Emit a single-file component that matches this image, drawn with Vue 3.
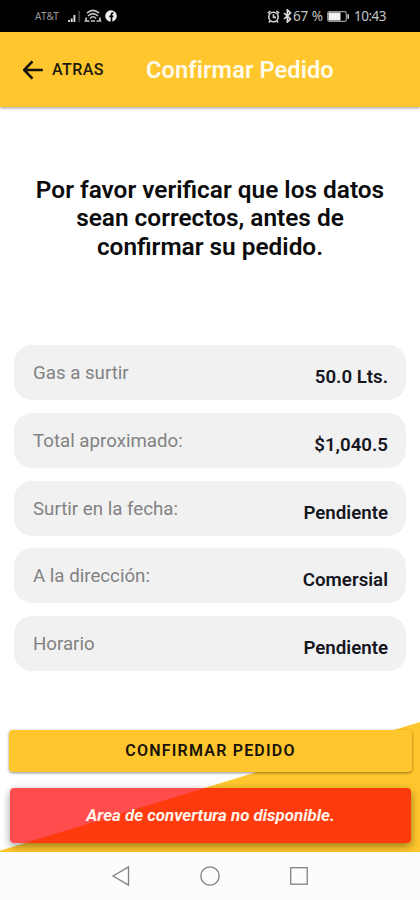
<template>
  <div class="screen">
    <div class="status-bar">
      <div class="status-left">
        <span class="carrier">AT&amp;T</span>
        <svg class="signal" width="13" height="13" viewBox="0 0 13 13">
          <path d="M1 10v2M3.7 8.5V12M6.4 5v7" stroke="#ddd" stroke-width="1.9" />
          <path d="M11.2 1v11" stroke="#444" stroke-width="1.6" />
        </svg>
        <svg class="wifi" width="18" height="14" viewBox="0 0 18 14" fill="none" stroke="#c4c4c4" stroke-width="1.6">
          <path d="M3 4.2Q9-1.5 15 4.2M4 7Q9 2.2 14 7M6 9.5Q9 6 12 9.5M2.5 8.5l-1 3.5h4M7 12h4M15.5 8.5l1 3.5h-4" />
        </svg>
        <svg class="facebook" width="12" height="12" viewBox="0 0 12 12">
          <circle cx="6" cy="6" r="5.8" fill="#eee" />
          <path d="M8.5 3H7.7Q6.5 3 6.5 4.3V12M4.3 6.4h4" fill="none" stroke="#000" stroke-width="1.6" />
        </svg>
      </div>
      <div class="status-right">
        <svg class="alarm" width="13" height="13" viewBox="0 0 13 13" fill="none" stroke="#d5d5d5" stroke-width="1.6">
          <circle cx="6.5" cy="7" r="4.7" />
          <path d="M.8 3.2L3.5 1M12.2 3.2L9.5 1M6.5 4.3V7.4H9M3 11l-1 1.5M10 11l1 1.5" />
        </svg>
        <svg class="bluetooth" width="9" height="14" viewBox="0 0 9 14" fill="none" stroke="#ddd" stroke-width="1.7">
          <path d="M1 4l6.5 6L4.4 13V1l3.1 3L1 10" />
        </svg>
        <span class="percent">67 %</span>
        <svg class="battery" width="23" height="11" viewBox="0 0 23 11">
          <rect x=".7" y=".7" width="18.6" height="9.6" rx="1.5" fill="none" stroke="#999" stroke-width="1.2" />
          <rect x="1.5" y="1.5" width="12" height="8" fill="#f2f2f2" />
          <path d="M21.2 3.3v4.4" stroke="#ccc" stroke-width="1.7" />
        </svg>
        <span class="clock">10:43</span>
      </div>
    </div>

    <header class="toolbar">
      <button class="back-btn">
        <svg width="22" height="20" viewBox="0 0 22 20" fill="none" stroke="#16120a" stroke-width="2.6" stroke-linejoin="round">
          <path d="M10.5 1.4L2.2 10l8.3 8.6M2.2 10h18.6" />
        </svg>
        <span>ATRAS</span>
      </button>
      <h1>Confirmar Pedido</h1>
    </header>

    <main class="content">
      <h2 class="notice">
        Por favor verificar que los datos<br>
        sean correctos, antes de<br>
        confirmar su pedido.
      </h2>

      <div class="details">
        <div v-for="item in details" :key="item.label" class="detail">
          <span class="label">{{ item.label }}</span>
          <span class="value">{{ item.value }}</span>
        </div>
      </div>

      <div class="actions">
        <button class="confirm-btn">CONFIRMAR PEDIDO</button>
        <div class="toast">Area de convertura no disponible.</div>
      </div>
    </main>

    <nav class="nav-bar">
      <svg width="20" height="22" viewBox="0 0 20 22">
        <path d="M2 11L17.5 2v18z" />
      </svg>
      <svg width="20" height="22" viewBox="0 0 20 22">
        <circle cx="10" cy="11" r="9.2" />
      </svg>
      <svg width="20" height="22" viewBox="0 0 20 22">
        <rect x="1.7" y="2.7" width="16.5" height="16.5" />
      </svg>
    </nav>
  </div>
</template>

<script setup>
const details = [
  { label: 'Gas a surtir', value: '50.0 Lts.' },
  { label: 'Total aproximado:', value: '$1,040.5' },
  { label: 'Surtir en la fecha:', value: 'Pendiente' },
  { label: 'A la dirección:', value: 'Comersial' },
  { label: 'Horario', value: 'Pendiente' }
];
</script>

<style>
body {
  margin: 0;
}
</style>

<style scoped>
.screen {
  width: 420px;
  height: 900px;
  display: flex;
  flex-direction: column;
  overflow: hidden;
  background: #fff;
  font-family: Roboto, "Liberation Sans", sans-serif;
}
button {
  border: none;
  padding: 0;
  font-family: inherit;
  cursor: pointer;
}
.status-bar {
  height: 32px;
  flex: none;
  box-sizing: border-box;
  display: flex;
  justify-content: space-between;
  padding: 0 34px 0 35px;
  background: #000;
  color: #c4c4c4;
}
.status-left,
.status-right {
  display: flex;
  align-items: center;
}
.carrier {
  width: 33px;
  font-family: "Noto Sans", sans-serif;
  font-size: 10px;
  letter-spacing: 0.2px;
  color: #999;
}
.wifi {
  margin-left: 3px;
}
.facebook {
  margin-left: 3px;
}
.bluetooth {
  margin-left: 3px;
}
.percent,
.clock {
  font-family: "Noto Sans", sans-serif;
  font-size: 13.5px;
  letter-spacing: -0.5px;
  white-space: nowrap;
}
.percent {
  width: 34px;
  margin-left: 1px;
  letter-spacing: -0.1px;
}
.clock {
  margin-left: 4px;
}
.toolbar {
  position: relative;
  height: 75px;
  flex: none;
  display: flex;
  align-items: center;
  background: #ffc62d;
  box-shadow: 0 1px 3px rgba(0, 0, 0, 0.4);
}
.back-btn {
  display: flex;
  align-items: center;
  gap: 8px;
  width: 124px;
  margin-left: 22px;
  background: transparent;
  color: #211a0c;
  font-size: 16px;
  font-weight: 500;
  letter-spacing: 0.4px;
}
.toolbar h1 {
  margin: 0;
  color: #fffbe8;
  font-size: 23.6px;
  font-weight: 600;
  letter-spacing: 0.1px;
  white-space: nowrap;
}
.content {
  position: relative;
  height: 745px;
  flex: none;
  display: flex;
  flex-direction: column;
}
/* yellow wedge behind the buttons */
.content::before {
  content: "";
  position: absolute;
  left: 0;
  right: 0;
  bottom: 0;
  height: 130px;
  background: #ffc62d;
  clip-path: polygon(0 99%, 100% 0, 100% 100%, 0 100%);
}
.notice {
  margin: 68.5px 0 0;
  text-align: center;
  color: #0b0b0b;
  font-size: 24.4px;
  line-height: 28.6px;
  font-weight: 600;
  white-space: nowrap;
}
.details {
  display: flex;
  flex-direction: column;
  gap: 12.8px;
  margin: 83.7px 14px 0;
}
.detail {
  height: 55px;
  box-sizing: border-box;
  display: flex;
  justify-content: space-between;
  padding: 0 18px 0 19px;
  border-radius: 18px;
  background: #f1f1f2;
  font-size: 18.7px;
}
.label {
  line-height: 56px;
  color: #828282;
}
.value {
  line-height: 65px;
  font-weight: 600;
  color: #16161e;
}
.actions {
  position: relative;
  display: flex;
  flex-direction: column;
  gap: 16px;
  margin: 59px 9px 0;
}
.confirm-btn {
  height: 42px;
  margin-right: -1px;
  border-radius: 4px;
  background: #ffc62d;
  color: #16120a;
  font-size: 16px;
  font-weight: 600;
  letter-spacing: 1.2px;
  line-height: 40px;
  box-shadow: 0 1px 3px rgba(0, 0, 0, 0.45);
}
.toast {
  height: 55px;
  margin-left: 1px;
  border-radius: 4px;
  background: rgba(255, 0, 0, 0.7);
  color: #fff2ea;
  font-size: 16.9px;
  font-style: italic;
  font-weight: 700;
  line-height: 54px;
  text-align: center;
  box-shadow: 0 3px 9px rgba(0, 0, 0, 0.4);
}
.nav-bar {
  position: relative;
  height: 48px;
  flex: none;
  display: flex;
  justify-content: center;
  align-items: center;
  gap: 69px;
  background: #fcfcfc;
}
.nav-bar svg {
  fill: none;
  stroke: #808080;
  stroke-width: 1.3;
}
</style>
